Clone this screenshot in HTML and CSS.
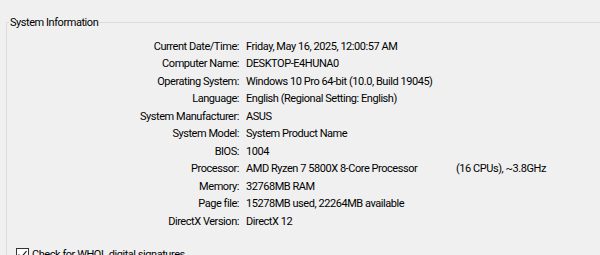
FILE: index.html
```html
<!DOCTYPE html>
<html>
    <head>
        <title>System Information</title>
        <meta charset="UTF-8">
        <link rel="stylesheet" href="styles.css">
    </head>
    <body>
        <fieldset class="group">
            <legend>System Information</legend>
            <div class="info">
                <span class="label">Current Date/Time:</span><span class="value">Friday, May 16, 2025, 12:00:57 AM</span>
                <span class="label">Computer Name:</span><span class="value">DESKTOP-E4HUNA0</span>
                <span class="label">Operating System:</span><span class="value">Windows 10 Pro 64-bit (10.0, Build 19045)</span>
                <span class="label">Language:</span><span class="value">English (Regional Setting: English)</span>
                <span class="label">System Manufacturer:</span><span class="value">ASUS</span>
                <span class="label">System Model:</span><span class="value">System Product Name</span>
                <span class="label">BIOS:</span><span class="value">1004</span>
                <span class="label">Processor:</span><span class="value split"><span class="cpu">AMD Ryzen 7 5800X 8-Core Processor</span><span>(16 CPUs), ~3.8GHz</span></span>
                <span class="label">Memory:</span><span class="value">32768MB RAM</span>
                <span class="label">Page file:</span><span class="value">15278MB used, 22264MB available</span>
                <span class="label">DirectX Version:</span><span class="value">DirectX 12</span>
            </div>

            <label class="check">
                <span class="box">
                    <svg width="11" height="11" viewBox="0 0 11 11"><path d="M1.5 5.5 L4.2 8.3 L9.5 2.2" fill="none" stroke="#222" stroke-width="1.2"></path></svg>
                </span>
                Check for WHQL digital signatures
            </label>
        </fieldset>
    </body>
</html>
```

FILE: styles.css
```css
body {
    margin: 0;
    background-color: #f0f0f0;
    font-family: Roboto, "Noto Sans", sans-serif;
    font-size: 11px;
    letter-spacing: -0.45px;
    color: #000;
    overflow: hidden;
}

.group {
    margin: 16px -20px 0 6px;
    padding: 9.5px 0 0 0;
    border: 1px solid #dcdcdc;
    border-bottom: none;
    height: 260px;
}

.group legend {
    padding: 0 1px;
    margin-left: 2px;
}

.info {
    display: grid;
    grid-template-columns: 232px 1fr;
    column-gap: 7px;
    row-gap: 2px;
    line-height: 15.5px;
}

.label {
    text-align: right;
}

.split {
    display: flex;
}

.cpu {
    width: 210px;
}

.check {
    display: flex;
    align-items: center;
    gap: 3px;
    margin: 19px 0 0 9px;
}

.box {
    width: 11px;
    height: 11px;
    border: 1px solid #333;
    background: #fff;
    display: flex;
}
```
